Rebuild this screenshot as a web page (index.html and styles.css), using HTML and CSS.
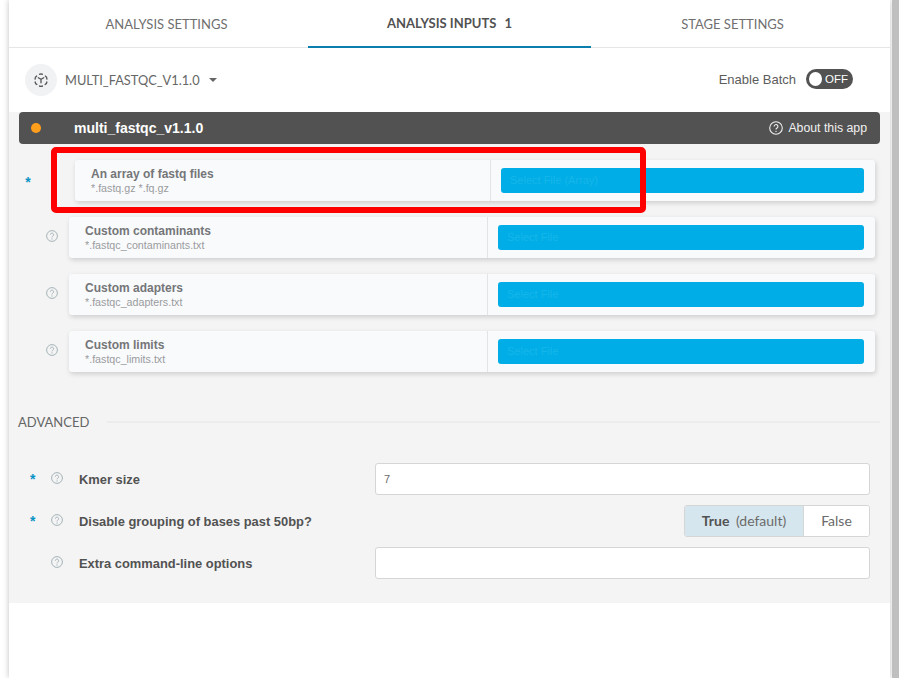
FILE: index.html
```html
<!DOCTYPE html>
<html>
<head>
    <title>Analysis Inputs</title>
    <link rel="stylesheet" href="styles.css">
</head>
<body>
    <div id="panel">
        <div id="tabs">
            <div class="tab">ANALYSIS SETTINGS</div>
            <div class="tab active">ANALYSIS INPUTS <span class="count">1</span></div>
            <div class="tab">STAGE SETTINGS</div>
        </div>

        <div id="app-row">
            <div class="app-icon">
                <svg width="14" height="14" viewBox="0 0 14 14" fill="none" stroke="#555" stroke-width="1.3">
                    <path d="M5 1.300 7 .8l2 .5M11 2.600l1.600 1.800.4 2.200M13 8.500l-.6 2-1.700 1.300M9 13l-2 .4L5 13M3.300 11.800l-1.700-1.300-.6-2M1 6.600l.4-2.200L3 2.600"/>
                    <path d="M3.800 4.500 7 6.300l3.200-1.800M7 6.300v4"/>
                </svg>
            </div>
            <div class="app-name">MULTI_FASTQC_V1.1.0</div>
            <div class="caret"></div>
            <div class="batch">
                <span>Enable Batch</span>
                <div class="switch"><div class="knob"></div>OFF</div>
            </div>
        </div>

        <div id="content">
            <div id="app-bar">
                <div class="dot"></div>
                <div class="app-title">multi_fastqc_v1.1.0</div>
                <div class="about">
                    <svg class="help" width="14" height="14" viewBox="0 0 14 14"><use href="#help-icon"/></svg>
                    About this app
                </div>
            </div>

            <div class="file-row first">
                <div class="side"><span class="star">*</span></div>
                <div class="file-card">
                    <div class="file-label">
                        <div class="file-name">An array of fastq files</div>
                        <div class="file-ext">*.fastq.gz *.fq.gz</div>
                    </div>
                    <div class="file-pick"><div class="pick-btn">Select File (Array)</div></div>
                </div>
            </div>

            <div class="file-row">
                <div class="side"><svg class="help-sm" width="12" height="12" viewBox="0 0 14 14"><use href="#help-icon"/></svg></div>
                <div class="file-card">
                    <div class="file-label">
                        <div class="file-name">Custom contaminants</div>
                        <div class="file-ext">*.fastqc_contaminants.txt</div>
                    </div>
                    <div class="file-pick"><div class="pick-btn">Select File</div></div>
                </div>
            </div>

            <div class="file-row">
                <div class="side"><svg class="help-sm" width="12" height="12" viewBox="0 0 14 14"><use href="#help-icon"/></svg></div>
                <div class="file-card">
                    <div class="file-label">
                        <div class="file-name">Custom adapters</div>
                        <div class="file-ext">*.fastqc_adapters.txt</div>
                    </div>
                    <div class="file-pick"><div class="pick-btn">Select File</div></div>
                </div>
            </div>

            <div class="file-row">
                <div class="side"><svg class="help-sm" width="12" height="12" viewBox="0 0 14 14"><use href="#help-icon"/></svg></div>
                <div class="file-card">
                    <div class="file-label">
                        <div class="file-name">Custom limits</div>
                        <div class="file-ext">*.fastqc_limits.txt</div>
                    </div>
                    <div class="file-pick"><div class="pick-btn">Select File</div></div>
                </div>
            </div>

            <div id="advanced">
                <span>ADVANCED</span>
                <div class="rule"></div>
            </div>

            <div class="form-row">
                <span class="star">*</span>
                <svg class="help-sm" width="12" height="12" viewBox="0 0 14 14"><use href="#help-icon"/></svg>
                <div class="form-label">Kmer size</div>
                <div class="text-input">7</div>
            </div>
            <div class="form-row">
                <span class="star">*</span>
                <svg class="help-sm" width="12" height="12" viewBox="0 0 14 14"><use href="#help-icon"/></svg>
                <div class="form-label">Disable grouping of bases past 50bp?</div>
                <div class="bool">
                    <div class="bool-true"><b>True</b> (default)</div>
                    <div class="bool-false">False</div>
                </div>
            </div>
            <div class="form-row">
                <span class="star"></span>
                <svg class="help-sm" width="12" height="12" viewBox="0 0 14 14"><use href="#help-icon"/></svg>
                <div class="form-label">Extra command-line options</div>
                <div class="text-input"></div>
            </div>
        </div>
    </div>
    <div id="scrollbar"></div>

    <!-- annotation drawn over the first input -->
    <div id="red-box"></div>

    <svg width="0" height="0" class="defs">
        <symbol id="help-icon" viewBox="0 0 14 14">
            <circle cx="7" cy="7" r="6.300" fill="none" stroke="currentColor" stroke-width="1.100"/>
            <path d="M5.100 5.500a1.900 1.900 0 1 1 2.900 1.600c-.7.400-1 .8-1 1.500" fill="none" stroke="currentColor" stroke-width="1.100"/>
            <circle cx="7" cy="10.400" r=".7" fill="currentColor"/>
        </symbol>
    </svg>
</body>
</html>
```

FILE: styles.css
```css
html, body {
    margin: 0;
    padding: 0;
    height: 678px;
    overflow: hidden;
}

body {
    display: flex;
    background-color: #fff;
    font-family: "Liberation Sans", Arial, sans-serif;
    color: #525252;
}

.defs {
    position: absolute;
}

#panel {
    width: 881px;
    margin-left: 9px;
    box-shadow: 0 0 6px rgba(0, 0, 0, 0.25);
    background-color: #fff;
}

#scrollbar {
    width: 7px;
    margin-left: 2px;
    background-color: #bfbfbf;
}

/* tabs */
#tabs {
    display: grid;
    grid-template-columns: 283px 283px 283px;
    justify-content: center;
    height: 47px;
    border-bottom: 1px solid #e4e6e8;
    box-sizing: content-box;
}

.tab {
    font-family: Lato, sans-serif;
    font-size: 13px;
    line-height: 48px;
    text-align: center;
    color: #6f6f6f;
}

.tab.active {
    font-weight: bold;
    color: #525252;
    height: 46px;
    line-height: 46px;
    border-bottom: 2px solid #0a7fad;
}

.count {
    margin-left: 5px;
}

/* app row */
#app-row {
    display: flex;
    align-items: center;
    height: 64px;
    padding: 0 37px 0 16px;
}

.app-icon {
    display: flex;
    align-items: center;
    justify-content: center;
    width: 32px;
    height: 32px;
    border-radius: 50%;
    background-color: #f1f2f4;
}

.app-name {
    font-family: Lato, sans-serif;
    font-size: 12.800px;
    margin-left: 8px;
    color: #666;
}

.caret {
    margin-left: 9px;
    border-top: 4px solid #666;
    border-left: 4px solid transparent;
    border-right: 4px solid transparent;
}

.batch {
    display: flex;
    align-items: center;
    margin-left: auto;
    font-size: 13px;
    color: #5c5c5c;
    margin-top: -2px;
}

.switch {
    display: flex;
    align-items: center;
    width: 47px;
    height: 20px;
    margin-left: 10px;
    border-radius: 10px;
    background-color: #525252;
    color: #fff;
    font-size: 11.500px;
    box-sizing: border-box;
    padding-left: 3px;
}

.knob {
    width: 13px;
    height: 14px;
    margin-right: 3px;
    border-radius: 50%;
    background-color: #fff;
}

/* main grey area */
#content {
    height: 491px;
    padding: 0 10px;
    background-color: #f4f4f4;
}

#app-bar {
    display: flex;
    align-items: center;
    height: 32px;
    padding: 0 13px 0 12px;
    border-radius: 4px;
    background-color: #525252;
    color: #fff;
}

.dot {
    width: 10px;
    height: 10px;
    border-radius: 50%;
    background-color: #ff9f1c;
}

.app-title {
    margin-left: 33px;
    font-size: 14px;
    font-weight: bold;
}

.about {
    display: flex;
    align-items: center;
    margin-left: auto;
    font-size: 12.300px;
    color: #f0f0f0;
}

.about .help {
    margin-right: 5px;
}

.file-row {
    display: flex;
    align-items: center;
    margin-top: 16px;
    padding-right: 5px;
}

.side {
    display: flex;
    align-items: center;
    justify-content: center;
    width: 48px;
    flex: none;
    padding-left: 3px;
    box-sizing: border-box;
    margin-right: 2px;
}

.side .help-sm {
    margin: -4px 0 0 14px;
}

.file-row.first .side {
    width: 54px;
    padding-right: 36px;
    padding-left: 0;
    margin: 2px 2px 0 0;
}

.file-card {
    display: flex;
    flex: 1;
    height: 41px;
    border-radius: 3px;
    background-color: #f9fafc;
    box-shadow: 1px 2px 5px rgba(0, 0, 0, 0.16);
}

.file-label {
    width: 419px;
    flex: none;
    padding: 7px 0 0 16px;
    box-sizing: border-box;
    border-right: 1px solid #e2e4e6;
}

.first .file-label {
    width: 416px;
}

.file-name {
    font-size: 12px;
    font-weight: bold;
    color: #747678;
    line-height: 14px;
}

.file-ext {
    font-size: 10.700px;
    color: #9a9c9e;
    line-height: 14px;
}

.file-pick {
    flex: 1;
    display: flex;
    align-items: center;
    padding: 0 11px 0 10px;
}

.pick-btn {
    flex: 1;
    height: 25px;
    line-height: 25px;
    padding-left: 9px;
    border-radius: 3px;
    background-color: #00ade6;
    color: #16b6ea;
    font-size: 11px;
}

#advanced {
    display: flex;
    align-items: center;
    height: 20px;
    margin: 40px 0 0 -1px;
    font-family: Lato, sans-serif;
    font-size: 13px;
    color: #666;
}

.rule {
    flex: 1;
    height: 2px;
    margin-left: 18px;
    background-color: #ececec;
}

.form-row {
    display: flex;
    align-items: center;
    height: 32px;
    margin-top: 10px;
    padding-right: 10px;
}

#advanced + .form-row {
    margin-top: 31px;
}

.star {
    width: 32px;
    flex: none;
    padding-left: 10px;
    box-sizing: border-box;
    font-size: 14px;
    font-weight: bold;
    color: #0a93c4;
}

.form-row .star {
    width: 32px;
    padding-left: 11px;
}

.side .star {
    width: auto;
    padding: 0;
}

.help-sm {
    flex: none;
    color: #9fb0b5;
}

.form-row .help-sm {
    margin-top: -2px;
}

.form-label {
    margin-left: 16px;
    flex: 1;
    font-size: 12.900px;
    font-weight: bold;
    color: #525252;
}

.text-input {
    width: 495px;
    height: 32px;
    line-height: 30px;
    flex: none;
    box-sizing: border-box;
    padding-left: 8px;
    border: 1px solid #d6d6d6;
    border-radius: 3px;
    background-color: #fff;
    font-size: 11px;
    color: #6a6a6a;
}

.bool {
    display: flex;
    width: 186px;
    height: 32px;
    box-sizing: border-box;
    border: 1px solid #d6d6d6;
    border-radius: 3px;
    font-family: Lato, sans-serif;
    font-size: 14px;
    line-height: 30px;
    text-align: center;
    overflow: hidden;
}

.bool-true {
    width: 118px;
    background-color: #d6e6ee;
    border-right: 1px solid #d6d6d6;
    color: #6a6a6a;
    word-spacing: 3px;
}

.bool-true b {
    color: #525252;
}

.bool-false {
    flex: 1;
    background-color: #fff;
    color: #6a6a6a;
}

/* annotation */
#red-box {
    position: absolute;
    left: 51px;
    top: 147px;
    width: 595px;
    height: 66px;
    box-sizing: border-box;
    border: 6px solid #f00;
    border-radius: 5px;
}
```
